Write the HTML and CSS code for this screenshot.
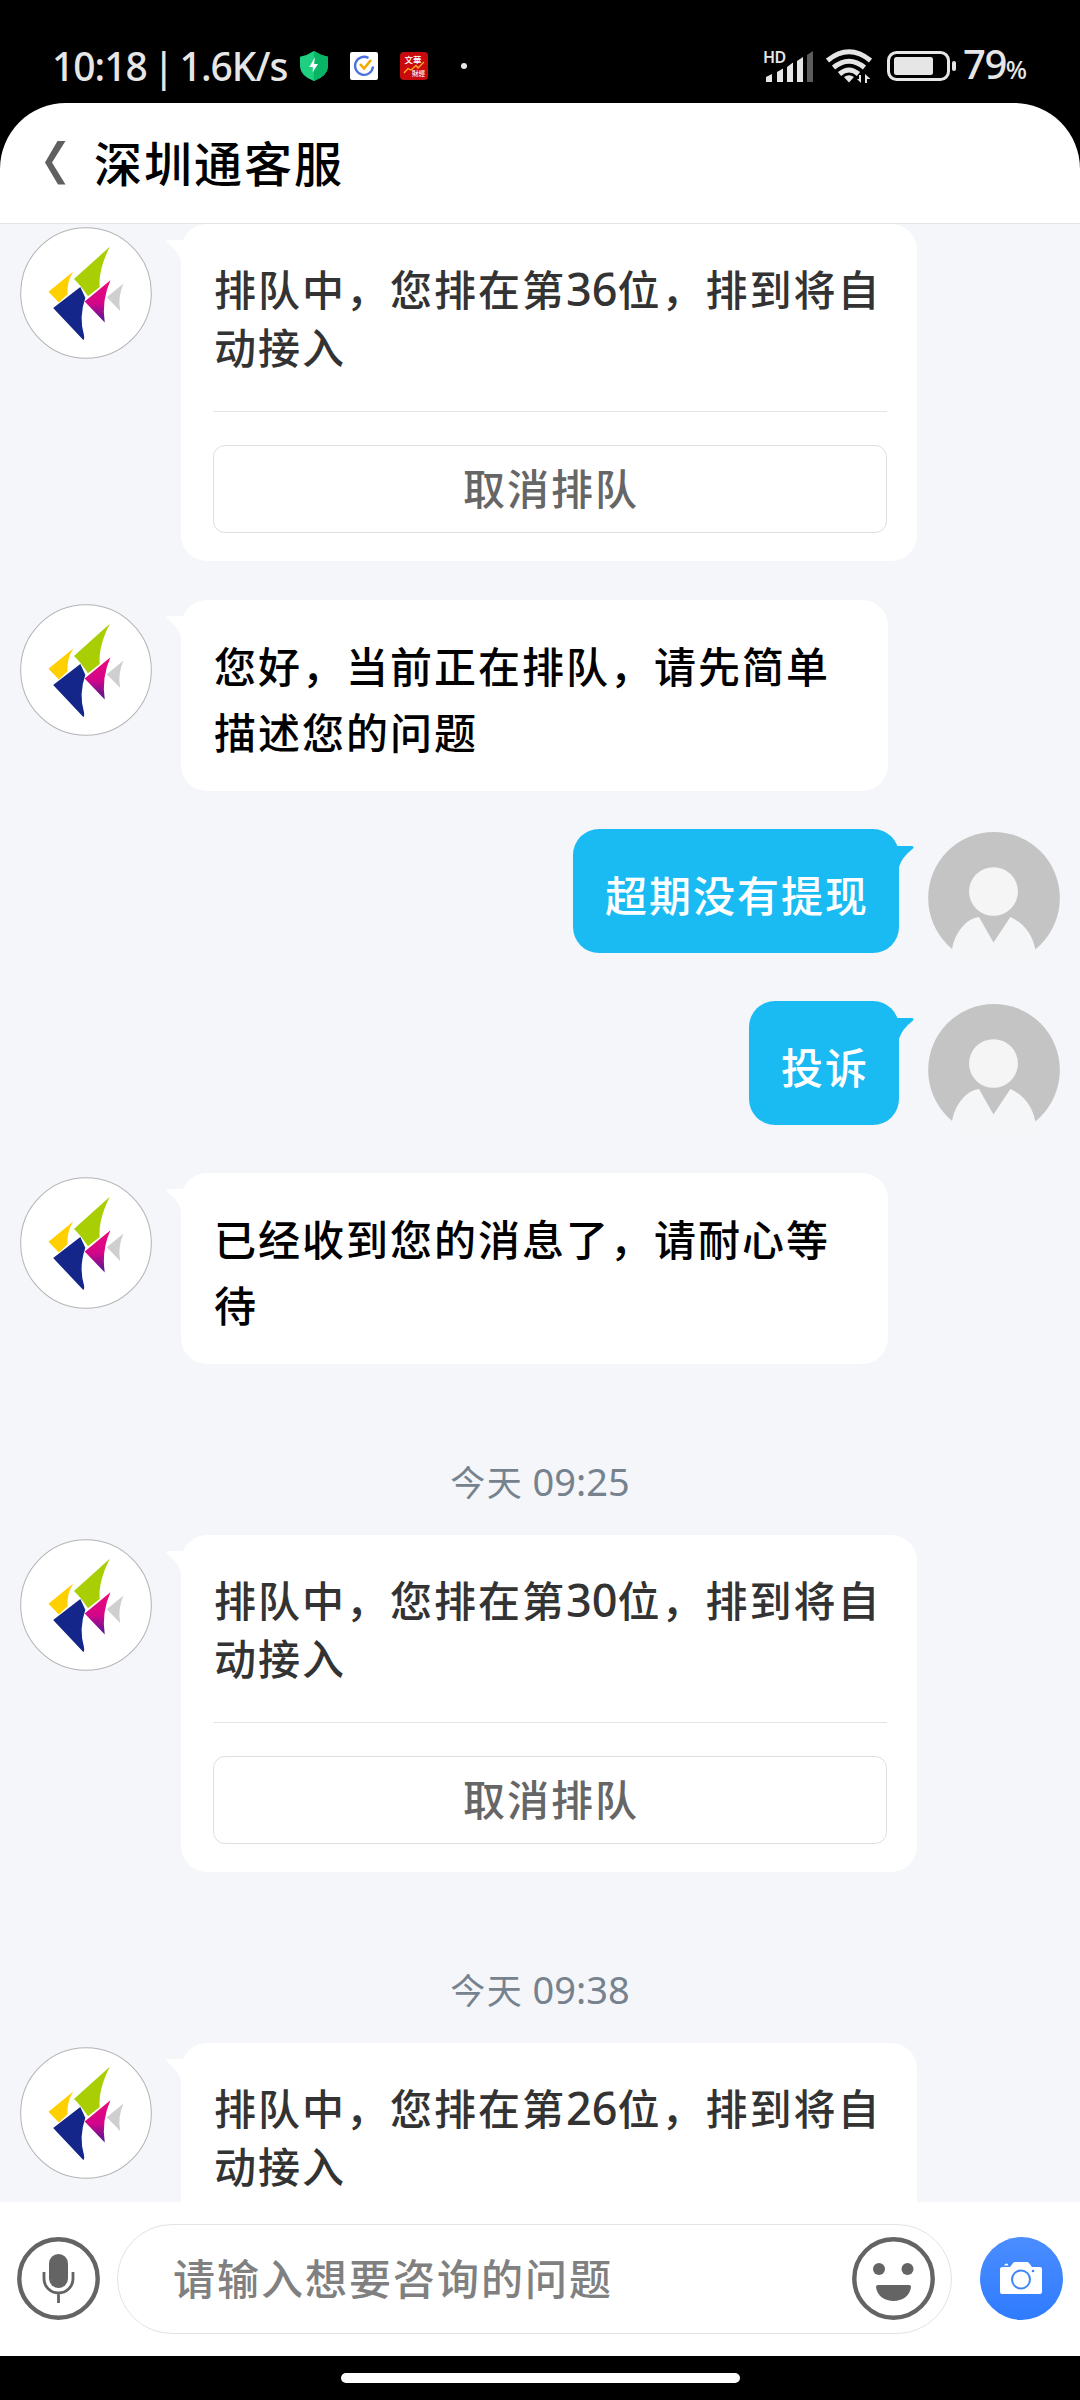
FILE: index.html
```html
<!DOCTYPE html>
<html lang="zh-CN">
<head>
<meta charset="utf-8">
<title>深圳通客服</title>
<link rel="stylesheet" href="styles.css">
</head>
<body>
<svg class="defs" width="0" height="0" aria-hidden="true">
  <defs>
    <linearGradient id="pink" x1="0" y1="0" x2="0" y2="1"><stop offset="0" stop-color="#ee0a78"/><stop offset=".55" stop-color="#d2058a"/><stop offset="1" stop-color="#4a1a90"/></linearGradient>
    <linearGradient id="cam" x1="0" y1="0" x2="0" y2="1"><stop offset="0" stop-color="#4b8dff"/><stop offset="1" stop-color="#2f7bff"/></linearGradient>
    <symbol id="fish" viewBox="61 51 394 394">
      <circle cx="258" cy="248" r="195" fill="#fff" stroke="#b4b4b6" stroke-width="3"/>
      <path fill="#a9cf04" d="M329 110L222 206Q240 222 264 258L299 230Q294 180 329 110Z"/>
      <path fill="#ffd000" d="M220 184L146 244L177 276L203 252Q200 215 220 184Z"/>
      <path fill="#14268a" d="M241 230L160 293L250 388Q254 386 252 374Q236 320 256 262Z"/>
      <path fill="url(#pink)" d="M331 210L254 273L314 336Q304 270 331 210Z"/>
      <path fill="#cfcfd1" d="M370 220L320 261L360 302Q352 260 370 220Z"/>
    </symbol>
    <symbol id="person" viewBox="1127 96 383 397" preserveAspectRatio="none">
      <ellipse cx="1318.500" cy="294.500" rx="191" ry="198.500" fill="#c4c4c4"/>
      <ellipse cx="1317" cy="275" rx="71" ry="73" fill="#f5f5f5"/>
      <path fill="#f5f6f8" d="M1197 447C1206 400 1235 358 1275 352L1317 428L1366 352C1405 370 1430 405 1438 447L1438 497H1197Z"/>
    </symbol>
    <symbol id="tail" viewBox="0 0 19 24"><path d="M0 0H16.500Q18.500 1.500 16.500 3Q6 11 3 21L0 24Z"/></symbol>
  </defs>
</svg>

<div class="status">
  <span class="clock">10:18 | 1.6K/s</span>
  <svg class="shield" viewBox="871 153 81 90" preserveAspectRatio="none"><path fill="#1ed080" d="M911 153Q930 166 952 170V200Q950 228 911 243Q873 228 871 200V170Q893 166 911 153Z"/><path fill="#08b564" d="M911 153Q930 166 952 170V200Q950 228 911 243Z"/><path fill="#fff" d="M914 172L898 201H908V217L923 192H912Z"/></svg>
  <svg class="tick" viewBox="0 0 28 28"><rect width="28" height="28" rx="2" fill="#fff"/><path d="M18.500 6A9 9 0 1 0 23 14.500" fill="none" stroke="#4a70e0" stroke-width="2.300"/><path d="M10 12L14 16.500L21 8" fill="none" stroke="#f5a800" stroke-width="2.600"/></svg>
  <svg class="stock" viewBox="0 0 28 28"><rect width="28" height="28" rx="4" fill="#c80a0c"/><text x="4.500" y="11" font-size="8.500">文華</text><text x="12" y="24" font-size="6.500">財經</text><path d="M4 21L8 16.500L11 18L16 13.500L18 16L24 10" fill="none" stroke="#ffb020" stroke-width="1.300"/></svg>
  <i class="dot"></i>
  <svg class="signal" viewBox="0 0 51 33"><text class="hd" x="0" y="12.500">HD</text><g fill="#e6e6e6"><path d="M3 27L9 24V32H3Z"/><path d="M14 22L20 18.500V32H14Z"/><path d="M24 17L30 12.500V32H24Z"/><path d="M34 11L40 7V32H34Z"/></g><path fill="#5c5c5c" d="M44 5L50 1V32H44Z"/></svg>
  <svg class="wifi" viewBox="0 0 46 35"><g fill="none" stroke="#e6e6e6" stroke-width="5"><path d="M1.500 11.500Q23-6 44.500 11.500"/><path d="M7.500 18.500Q23 6 38.500 18.500"/><path d="M13.500 25Q23 17 32.500 25"/></g><path fill="#e6e6e6" d="M18 28Q23 24.500 28 28L23 33.500ZM35 26V34L31 30H33V26ZM39 34V25L44.500 30H41V34Z"/></svg>
  <svg class="battery" viewBox="0 0 70 30"><rect x="1.500" y="1.500" width="60" height="27" rx="8" fill="none" stroke="#e6e6e6" stroke-width="3"/><rect x="7" y="6" width="39" height="18" rx="2.500" fill="#e6e6e6"/><rect x="65" y="10" width="4" height="10" rx="2" fill="#e6e6e6"/></svg>
  <span class="percent">79<small>%</small></span>
</div>

<header class="header">
  <svg class="back" viewBox="0 0 21 44"><path fill="#606060" d="M12.500 0H20.500L7 21.500L20.500 43.500H13L0 21.500Z"/></svg>
  <h1>深圳通客服</h1>
</header>

<main class="chat">
  <div class="row">
    <svg class="avatar"><use href="#fish"/></svg>
    <div class="bubble card"><svg class="tail"><use href="#tail"/></svg>
      <p>排队中，您排在第<b>36</b>位，排到将自动接入</p><button>取消排队</button></div>
  </div>
  <div class="row after-card">
    <svg class="avatar"><use href="#fish"/></svg>
    <div class="bubble text"><svg class="tail"><use href="#tail"/></svg>您好，当前正在排队，请先简单描述您的问题</div>
  </div>
  <div class="row mine first">
    <div class="bubble"><svg class="tail"><use href="#tail"/></svg>超期没有提现</div>
    <svg class="avatar"><use href="#person"/></svg>
  </div>
  <div class="row mine">
    <div class="bubble"><svg class="tail"><use href="#tail"/></svg>投诉</div>
    <svg class="avatar"><use href="#person"/></svg>
  </div>
  <div class="row">
    <svg class="avatar"><use href="#fish"/></svg>
    <div class="bubble text"><svg class="tail"><use href="#tail"/></svg>已经收到您的消息了，请耐心等待</div>
  </div>
  <time>今天 <b>09:25</b></time>
  <div class="row">
    <svg class="avatar"><use href="#fish"/></svg>
    <div class="bubble card"><svg class="tail"><use href="#tail"/></svg>
      <p>排队中，您排在第<b>30</b>位，排到将自动接入</p><button>取消排队</button></div>
  </div>
  <time>今天 <b>09:38</b></time>
  <div class="row">
    <svg class="avatar"><use href="#fish"/></svg>
    <div class="bubble card"><svg class="tail"><use href="#tail"/></svg>
      <p>排队中，您排在第<b>26</b>位，排到将自动接入</p></div>
  </div>
</main>

<footer class="composer">
  <svg class="mic" viewBox="0 0 83 83"><circle cx="41.500" cy="41.500" r="39.200" fill="none" stroke="#646464" stroke-width="4.400"/><rect x="32" y="17" width="19" height="34" rx="9.500" fill="#646464"/><path d="M27 35V41.500A14.500 14.500 0 0 0 56 41.500V35M41.500 56V66" fill="none" stroke="#646464" stroke-width="2.800"/></svg>
  <div class="field">
    <span>请输入想要咨询的问题</span>
    <svg class="smile" viewBox="0 0 83 83"><circle cx="41.500" cy="41.500" r="39.200" fill="none" stroke="#646464" stroke-width="4.400"/><g fill="#646464"><circle cx="27" cy="32" r="6"/><circle cx="55.500" cy="32" r="6"/><path d="M26 48H57Q59 48 59 50C58 59 50 64 41.500 64C33 64 25 59 24 50Q24 48 26 48Z"/></g></svg>
  </div>
  <svg class="camera" viewBox="0 0 83 83"><circle cx="41.500" cy="41.500" r="41.500" fill="url(#cam)"/><path fill="#fff" d="M23 30H30L33.500 25.500Q34 25 35 25H47Q48 25 49 26L52 30H60Q62 30 62 32V55Q62 57 60 57H22Q20 57 20 55V32Q20 30 23 30ZM24 28.500Q25 26.500 26.500 26.500Q28 26.500 28.500 28.500Z"/><circle cx="41" cy="42.500" r="9" fill="none" stroke="#3e86f8" stroke-width="2"/><circle cx="53" cy="34" r="1.300" fill="#3e86f8"/></svg>
</footer>
<div class="nav"><i></i></div>
</body>
</html>
```
FILE: styles.css
```css
* { box-sizing: border-box; margin: 0; }
body {
  width: 1080px; height: 2400px; overflow: hidden;
  display: flex; flex-direction: column;
  background: #000;
  font-family: "Noto Sans CJK SC", sans-serif;
  font-weight: 500; font-size: 42px; letter-spacing: 2px;
}
svg { display: block; flex: none; }
.defs { width: 0; height: 0; position: absolute; }
b { font-family: "Noto Sans", sans-serif; font-weight: 500; font-size: 45px; line-height: 1; letter-spacing: 0; }

.status { height: 103px; flex: none; display: flex; align-items: center; padding: 29px 54px 0 52px; color: #e6e6e6; letter-spacing: 0; }
.clock { width: 248px; font: 500 39px/40px "Noto Sans", sans-serif; letter-spacing: -1px; word-spacing: -3px; white-space: nowrap; }
.shield { width: 28px; height: 30px; }
.tick { width: 28px; height: 28px; margin-left: 22px; }
.stock { width: 28px; height: 28px; margin-left: 22px; fill: #fff; }
.dot { width: 6px; height: 6px; margin-left: 33px; border-radius: 50%; background: #e6e6e6; }
.signal { width: 51px; height: 33px; margin-left: auto; overflow: visible; }
.hd { font: 600 16px "Noto Sans", sans-serif; fill: #e6e6e6; letter-spacing: -.5px; }
.wifi { width: 46px; height: 35px; margin-left: 12px; }
.battery { width: 70px; height: 30px; margin-left: 15px; }
.percent { width: 63px; margin-left: 6px; font: 500 40px/40px "Noto Sans", sans-serif; letter-spacing: -1.500px; white-space: nowrap; }
.percent small { font-size: 25px; }

.header { height: 121px; flex: none; display: flex; align-items: center; padding-left: 45px; background: #fff; border-bottom: 1px solid #e3e4e6; border-radius: 66px 66px 0 0; }
.back { width: 21px; height: 44px; }
.header h1 { margin-left: 28px; padding-bottom: 5px; font-size: 48px; font-weight: 500; line-height: 60px; }

.chat { height: 1978px; flex: none; overflow: hidden; background: #f4f6fa; }
.row { display: flex; align-items: flex-start; gap: 29px; padding: 0 20px; margin-top: 48px; }
.row:first-child { margin-top: 0; }
.row.after-card { margin-top: 39px; }
.row.first { margin-top: 38px; }
.mine { justify-content: flex-end; height: 124px; }
.avatar { width: 132px; height: 132px; margin-top: 4px; }
.row:first-child .avatar { margin-top: 3px; }
.mine .avatar { margin-top: 3px; }
.bubble { position: relative; border-radius: 26px; background: #fff; padding: 32px 30px 26px 33px; line-height: 66px; color: #000; }
.mine .bubble { padding-left: 32px; background: #1abbf3; color: #fff; }
.bubble.text { width: 707px; height: 191px; }
.bubble.card { width: 736px; padding: 35px 30px 28px 32px; color: #333; }
.card p { height: 153px; padding-left: 1px; line-height: 58px; border-bottom: 1px solid #e4e4e4; }
.card button { display: block; width: 100%; height: 88px; margin-top: 33px; padding: 0 0 5px 2px; border: 1px solid #dedfe0; border-radius: 12px; background: #fff; color: #666; font: inherit; letter-spacing: inherit; }
.tail { position: absolute; left: -16px; top: 16px; width: 19px; height: 24px; fill: #fff; transform: scaleX(-1); }
.mine .tail { left: auto; right: -16px; top: 17px; fill: #1abbf3; transform: none; }
time { display: block; height: 40px; margin-top: 97px; text-align: center; font-size: 35px; font-weight: 400; line-height: 40px; letter-spacing: 1.500px; color: #76828d; }
time b { font-size: 38px; font-weight: 400; }
time + .row { margin-top: 34px; }

.composer { height: 154px; flex: none; display: flex; align-items: center; padding: 0 17px 1px; background: #fff; }
.mic, .smile, .camera { width: 83px; height: 83px; }
.field { width: 835px; height: 110px; margin: 0 28px 0 17px; display: flex; align-items: center; justify-content: space-between; padding: 0 16px 0 55px; border: 1px solid #e3e3e3; border-radius: 55px; color: #808080; }
.field span { padding-bottom: 5px; }
.nav { flex: 1; display: flex; justify-content: center; padding-top: 17px; }
.nav i { width: 399px; height: 10px; border-radius: 5px; background: #fff; }
```
